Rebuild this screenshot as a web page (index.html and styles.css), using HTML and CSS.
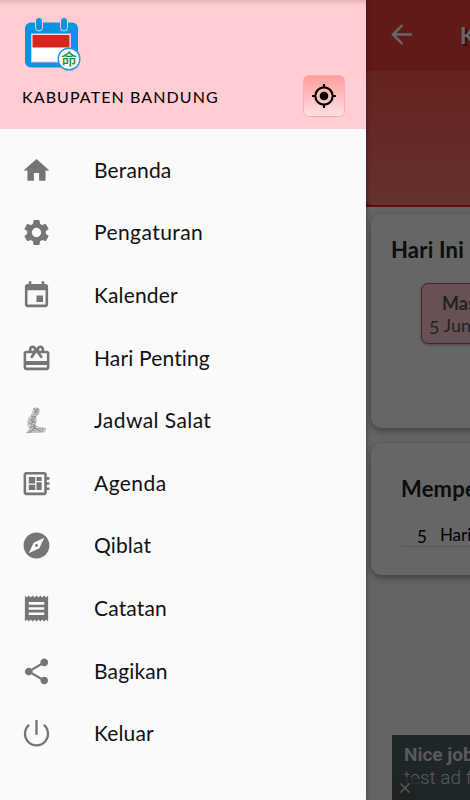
FILE: index.html
```
<!DOCTYPE html>
<html lang="id">
<head>
  <meta charset="UTF-8">
  <title>Kalender</title>
  <link rel="stylesheet" href="styles.css">
</head>
<body>
  <main class="page">
    <header class="hero">
      <div class="toolbar">
        <svg class="back" viewBox="0 0 24 24"><path d="M20 11H7.83l5.59-5.59L12 4l-8 8 8 8 1.41-1.41L7.83 13H20v-2z"/></svg>
        <h1>Kalender</h1>
      </div>
      <div class="banner"></div>
    </header>
    <section class="card today">
      <h2>Hari Ini</h2>
      <div class="event">
        <strong>Masehi</strong>
        <span><i class="old">5</i> Juni</span>
      </div>
    </section>
    <section class="card memorial">
      <h2>Memperingati</h2>
      <p><i class="old">5</i><span>Hari</span></p>
    </section>
    <aside class="ad">
      <strong>Nice job!</strong>
      <span>test ad from</span>
      <div class="ad-close"><svg viewBox="0 0 10 10"><path d="M0.5 0.5l9 9M9.5 0.5l-9 9"/></svg></div>
    </aside>
  </main>
  <div class="scrim"></div>

  <nav class="drawer">
    <header class="drawer-head">
      <svg class="logo" viewBox="0 0 58 56">
        <rect x="1" y="5.500" width="53" height="45" rx="6" fill="#0795e2"/>
        <rect x="11.500" y="0.500" width="7" height="13.500" rx="3.500" fill="#0795e2" stroke="#ffcdd2"/>
        <rect x="36.500" y="0.500" width="7" height="13.500" rx="3.500" fill="#0795e2" stroke="#ffcdd2"/>
        <rect x="7.500" y="17" width="39" height="28" fill="#fff" stroke="#f4bfca"/>
        <path d="M8.500 18h37v12.500h-37z" fill="#d9251d"/>
        <circle cx="45" cy="42" r="10.800" fill="#fff" stroke="#1b96e5" stroke-width="1.400"/>
        <text x="45" y="47.500" text-anchor="middle">命</text>
      </svg>
      <div class="place">
        <span>KABUPATEN BANDUNG</span>
        <button type="button" class="locate">
          <svg viewBox="0 0 24 24"><circle cx="12" cy="12" r="4"/><circle cx="12" cy="12" r="8" fill="none" stroke="#000" stroke-width="2"/><path d="M11 1h2v3h-2zM11 20h2v3h-2zM1 11h3v2H1zM20 11h3v2h-3z"/></svg>
        </button>
      </div>
    </header>
    <ul class="menu">
      <li><svg viewBox="0 0 24 24"><path d="M10 20v-6h4v6h5v-8h3L12 3 2 12h3v8z"/></svg><span>Beranda</span></li>
      <li><svg viewBox="0 0 24 24"><path d="M19.140 12.940c.04-.3.060-.61.060-.94 0-.32-.02-.64-.07-.94l2.030-1.580c.18-.14.23-.41.120-.61l-1.920-3.320c-.12-.22-.37-.29-.59-.22l-2.390.96c-.5-.38-1.030-.7-1.620-.94l-.36-2.540c-.04-.24-.24-.41-.48-.41h-3.840c-.24 0-.43.17-.47.41l-.36 2.540c-.59.24-1.130.57-1.620.94l-2.390-.96c-.22-.08-.47 0-.59.22L2.740 8.870c-.12.21-.08.47.120.61l2.030 1.580c-.05.3-.09.63-.09.94s.02.640.070.940l-2.030 1.580c-.18.14-.23.41-.12.610l1.920 3.320c.12.22.37.29.59.22l2.390-.96c.5.38 1.030.7 1.620.94l.36 2.540c.05.24.24.410.480.410h3.840c.24 0 .44-.17.470-.41l.36-2.540c.59-.24 1.130-.56 1.620-.94l2.390.96c.22.080.47 0 .59-.22l1.920-3.320c.12-.22.070-.47-.12-.61l-2.010-1.580zM12 15.600a3.600 3.600 0 1 1 0-7.200 3.600 3.600 0 0 1 0 7.200z"/></svg><span class="wide">Pengaturan</span></li>
      <li><svg viewBox="0 0 24 24"><path d="M17 12h-5v5h5v-5zM16 1v2H8V1H6v2H5c-1.110 0-1.990.9-1.990 2L3 19c0 1.100.89 2 2 2h14c1.100 0 2-.9 2-2V5c0-1.100-.9-2-2-2h-1V1h-2zm3 18H5V8h14v11z"/></svg><span>Kalender</span></li>
      <li><svg viewBox="0 0 24 24"><path d="M20 6h-2.180c.11-.31.180-.65.180-1 0-1.660-1.340-3-3-3-1.050 0-1.960.54-2.500 1.350l-.5.670-.5-.68C10.960 2.540 10.050 2 9 2 7.340 2 6 3.340 6 5c0 .35.070.69.180 1H4c-1.110 0-1.990.89-1.990 2L2 19c0 1.110.89 2 2 2h16c1.110 0 2-.89 2-2V8c0-1.110-.89-2-2-2zm-5-2c.55 0 1 .45 1 1s-.45 1-1 1-1-.45-1-1 .45-1 1-1zM9 4c.55 0 1 .45 1 1s-.45 1-1 1-1-.45-1-1 .45-1 1-1zm11 15H4v-2h16v2zm0-5H4V8h5.080L7 10.830 8.620 12 12 7.400l3.380 4.600L17 10.830 14.920 8H20v6z"/></svg><span>Hari Penting</span></li>
      <li><svg class="salat" viewBox="0 0 31 31"><path d="M12 5l3-3 3 1 1 3-2 4-2 2 1 3-1 5 3 2 7 1v3l-4 2H5l3-4-2-5 1-6 3-3 1-3z"/><path class="lines" d="M12 4l6 1-5 2 5 1M10 11l5 1-6 3 6 2-7 1 7 3-6 1 8 2 5-1M8 26l7-3 4 3 5-3M6 28l8-3 9 2M13 3l3 6-6 10 5 5M17 3l-6 11 3 8-5 6"/></svg><span class="wide">Jadwal Salat</span></li>
      <li><svg viewBox="0 0 24 24"><path d="M22 9V7h-2V5c0-1.100-.9-2-2-2H4c-1.100 0-2 .9-2 2v14c0 1.100.9 2 2 2h14c1.100 0 2-.9 2-2v-2h2v-2h-2v-2h2v-2h-2V9h2zm-4 10H4V5h14v14zM6 13h5v4H6v-4zm6-6h4v3h-4V7zM6 7h5v5H6V7zm6 4h4v6h-4v-6z"/></svg><span class="wide">Agenda</span></li>
      <li><svg viewBox="0 0 24 24"><path d="M12 10.900c-.61 0-1.100.49-1.100 1.100s.49 1.100 1.100 1.100 1.100-.49 1.100-1.100-.49-1.100-1.100-1.100zM12 2C6.480 2 2 6.480 2 12s4.480 10 10 10 10-4.480 10-10S17.520 2 12 2zm2.190 12.190L6 18l3.810-8.190L18 6l-3.810 8.190z"/></svg><span>Qiblat</span></li>
      <li><svg viewBox="0 0 24 24"><path d="M18 17H6v-2h12v2zm0-4H6v-2h12v2zm0-4H6V7h12v2zM3 22l1.500-1.500L6 22l1.500-1.500L9 22l1.500-1.500L12 22l1.500-1.500L15 22l1.500-1.500L18 22l1.500-1.500L21 22V2l-1.500 1.500L18 2l-1.500 1.500L15 2l-1.500 1.500L12 2l-1.500 1.500L9 2 7.500 3.500 6 2 4.500 3.500 3 2v20z"/></svg><span>Catatan</span></li>
      <li><svg viewBox="0 0 24 24"><path d="M18 16.080c-.76 0-1.440.3-1.960.77L8.910 12.700c.05-.23.090-.46.090-.7s-.04-.47-.09-.7l7.050-4.110c.54.5 1.250.81 2.040.81 1.660 0 3-1.340 3-3s-1.340-3-3-3-3 1.340-3 3c0 .24.040.47.090.7L8.040 9.810C7.500 9.310 6.790 9 6 9c-1.660 0-3 1.340-3 3s1.340 3 3 3c.79 0 1.500-.31 2.040-.81l7.120 4.160c-.05.21-.08.430-.08.650 0 1.610 1.310 2.920 2.920 2.920s2.920-1.310 2.920-2.920-1.310-2.920-2.920-2.920z"/></svg><span>Bagikan</span></li>
      <li><svg viewBox="0 0 24 24"><path d="M12 1.500v11.500M6.300 5.400a8.900 8.900 0 1 0 11.400 0" fill="none" stroke="#757575" stroke-width="1.800"/></svg><span>Keluar</span></li>
    </ul>
  </nav>
</body>
</html>
```
FILE: styles.css
```
* {
  box-sizing: border-box;
}
body {
  margin: 0;
  width: 470px;
  height: 800px;
  overflow: hidden;
  position: relative;
  font-family: Lato, "Noto Sans", sans-serif;
  background-color: #fff;
}
h1, h2, p, ul {
  margin: 0;
  padding: 0;
}

/* page under the drawer */
.page {
  height: 800px;
  padding-left: 366px;
  overflow: hidden;
  display: flex;
  flex-direction: column;
  background-color: #fafafa;
}
.hero {
  height: 207px;
  flex: none;
  background-color: #ff1410;
  padding-bottom: 2px;
}
.toolbar {
  height: 71px;
  display: flex;
  align-items: center;
  padding-left: 20px;
  background-color: #f5413c;
}
.back {
  width: 31px;
  height: 31px;
  flex: none;
  fill: #fff;
  margin-top: -3px;
}
.toolbar h1 {
  margin-left: 43px;
  font-size: 22px;
  color: #fff;
  text-shadow: 2px 2px 2px rgba(0,0,0,0.7);
}
.banner {
  height: 134px;
  background: linear-gradient(#fc5750, #fc7a75);
  border-bottom-left-radius: 5px;
}
.card {
  flex: none;
  width: 360px;
  margin-left: 5px;
  border-radius: 11px;
  background-color: #fff;
  box-shadow: 0 3px 7px rgba(0,0,0,0.35);
}
.card h2 {
  font-size: 22px;
  line-height: 26px;
  letter-spacing: 0.200px;
  color: #222;
  white-space: nowrap;
}
.old {
  display: inline-block;
  font-style: normal;
  transform: translateY(2px);
}
.today {
  height: 214px;
  margin-top: 7px;
  padding: 23px 0 0 20px;
}
.event {
  width: 130px;
  height: 61px;
  margin: 20px 0 0 30px;
  padding: 8px 0 0 7px;
  display: flex;
  flex-direction: column;
  border: 1.500px solid #f14550;
  border-radius: 7px;
  background-color: #ffcdd2;
  color: #555;
  box-shadow: 0 1px 3px rgba(0,0,0,0.3);
}
.event strong {
  font-size: 18px;
  line-height: 22px;
  padding-left: 13px;
}
.event span {
  font-size: 18px;
  line-height: 22px;
}
.memorial {
  height: 132px;
  margin-top: 15px;
  padding: 33px 0 0 30px;
}
.memorial p {
  display: flex;
  gap: 13px;
  height: 28px;
  margin-top: 17px;
  padding: 6px 0 0 16px;
  font-size: 17px;
  line-height: 20px;
  border-bottom: 1px solid #ddd;
}
.ad {
  position: relative;
  height: 65px;
  width: 300px;
  flex: none;
  margin: auto 0 0 26px;
  padding: 8px 0 0 12px;
  display: flex;
  flex-direction: column;
  background-color: #4b5f66;
  font-family: Roboto, sans-serif;
  font-size: 19px;
  line-height: 23px;
  color: #dedede;
}
.ad span {
  font-weight: 300;
}
.ad-close {
  position: absolute;
  left: 0;
  bottom: 0;
  width: 26px;
  height: 23px;
  padding: 6px 0 0 8px;
  background-color: rgba(85,85,85,0.7);
}
.ad-close svg {
  display: block;
  width: 10px;
  height: 10px;
  stroke: #ddd;
  stroke-width: 1.500;
}
.scrim {
  position: absolute;
  inset: 0;
  background-color: rgba(0,0,0,0.6);
}

/* drawer */
.drawer {
  position: absolute;
  top: 0;
  left: 0;
  width: 366px;
  height: 800px;
  background-color: #fafafa;
  box-shadow: 0 0 5px rgba(0,0,0,0.4);
}
.drawer-head {
  height: 128.500px;
  padding: 17px 21px 0 22px;
  background: linear-gradient(#dfb3b7, #fac8cd 4px, #ffcdd2 8px);
}
.logo {
  display: block;
  width: 58px;
  height: 56px;
  margin-left: 2px;
}
.logo text {
  font-family: "Noto Sans CJK TC", sans-serif;
  font-size: 16px;
  font-weight: 500;
  fill: #129447;
}
.place {
  display: flex;
  align-items: center;
  justify-content: space-between;
  margin-top: 2px;
  font-size: 16px;
  letter-spacing: 1.100px;
}
.locate {
  width: 42px;
  height: 42px;
  padding: 0;
  display: flex;
  align-items: center;
  justify-content: center;
  border: 1px solid #ffabab;
  border-radius: 6px;
  background: linear-gradient(#ff9d9d, #ffdfe1);
}
.locate svg {
  width: 26px;
  height: 26px;
}
.menu {
  list-style: none;
  padding-top: 10.500px;
}
.menu li {
  display: flex;
  align-items: center;
  height: 62.600px;
  padding-left: 21px;
  font-size: 21px;
  letter-spacing: 0.150px;
  color: #111;
}
.menu li span {
  padding-bottom: 2px;
}
.menu .wide {
  letter-spacing: 0.420px;
}
.menu svg {
  width: 31px;
  height: 31px;
  flex: none;
  margin-right: 42px;
  fill: #757575;
}
.menu .salat {
  fill: #c8c8c8;
}
.salat .lines {
  fill: none;
  stroke: #777;
  stroke-width: 0.700;
  stroke-dasharray: 2 1;
}
```
